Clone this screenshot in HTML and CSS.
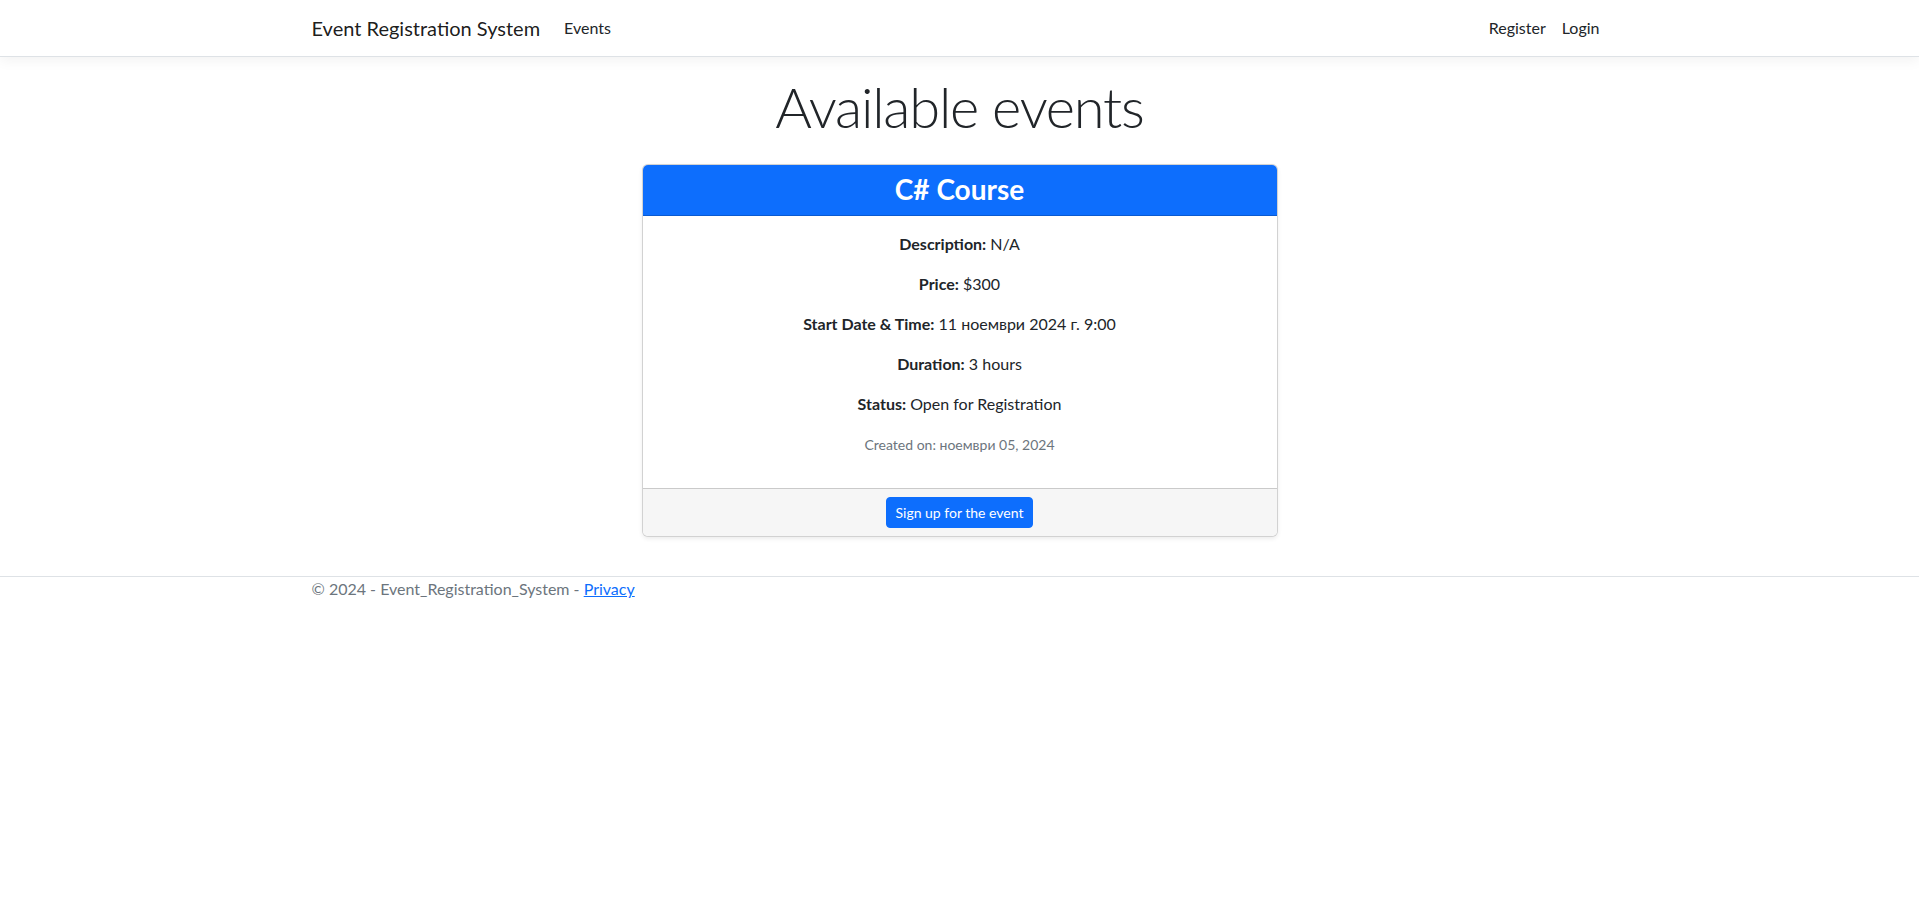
FILE: index.html
```html
<!DOCTYPE html>
<html lang="en">
<head>
<meta charset="utf-8">
<title>Available events - Event Registration System</title>
<link rel="stylesheet" href="styles.css">
</head>
<body>
<header class="navbar">
  <div class="container nav-inner">
    <a class="brand" href="#">Event Registration System</a>
    <ul class="nav-links">
      <li><a class="nav-link" href="#">Events</a></li>
    </ul>
    <ul class="nav-links nav-right">
      <li><a class="nav-link" href="#">Register</a></li>
      <li><a class="nav-link" href="#">Login</a></li>
    </ul>
  </div>
</header>

<main class="container main">
  <h1 class="display">Available events</h1>
  <div class="card">
    <div class="card-header">
      <h3 class="card-title">C# Course</h3>
    </div>
    <div class="card-body">
      <p><strong>Description:</strong> N/A</p>
      <p><strong>Price:</strong> $300</p>
      <p><strong>Start Date &amp; Time:</strong> 11 ноември 2024 г. 9:00</p>
      <p><strong>Duration:</strong> 3 hours</p>
      <p><strong>Status:</strong> Open for Registration</p>
      <p><small class="muted">Created on: ноември 05, 2024</small></p>
    </div>
    <div class="card-footer">
      <a class="btn" href="#">Sign up for the event</a>
    </div>
  </div>
</main>

<footer class="footer">
  <div class="container">
    &copy; 2024 - Event_Registration_System - <a class="privacy" href="#">Privacy</a>
  </div>
</footer>
</body>
</html>
```
FILE: styles.css
```css
* { box-sizing: border-box; }

html, body {
  margin: 0;
  padding: 0;
}

body {
  font-family: Lato, "Noto Sans", sans-serif;
  font-size: 16px;
  line-height: 1.5;
  color: #212529;
  background: #fff;
}

a { text-decoration: none; }

.container {
  width: 100%;
  max-width: 1320px;
  margin: 0 auto;
  padding: 0 12px;
}

/* Navbar */
.navbar {
  background: #fff;
  border-bottom: 1px solid #dee2e6;
  box-shadow: 0 4px 12px rgba(0, 0, 0, 0.05);
  padding: 8px 0;
  margin-bottom: 16px;
}

.nav-inner {
  display: flex;
  align-items: center;
}

.brand {
  font-size: 20px;
  line-height: 30px;
  padding: 5px 0;
  margin-right: 16px;
  color: rgba(0, 0, 0, 0.9);
  white-space: nowrap;
}

.nav-links {
  display: flex;
  list-style: none;
  margin: 0;
  padding: 0;
}

.nav-right {
  margin-left: auto;
}

.nav-link {
  display: block;
  padding: 8px;
  color: #212529;
  font-size: 16px;
  line-height: 24px;
}

/* Main */
.main {
  padding-bottom: 16px;
}

.display {
  font-size: 56px;
  font-weight: 300;
  line-height: 1.2;
  letter-spacing: -1.2px;
  text-align: center;
  margin: 0 0 24px;
}

.card {
  width: 636px;
  margin: 0 auto;
  border: 1px solid rgba(0, 0, 0, 0.175);
  border-radius: 6px;
  box-shadow: 0 2px 4px rgba(0, 0, 0, 0.075);
  overflow: hidden;
  background: #fff;
}

.card-header {
  background: #0d6efd;
  color: #fff;
  padding: 8px 16px;
  border-bottom: 1px solid rgba(0, 0, 0, 0.175);
  text-align: center;
}

.card-title {
  margin: 0;
  font-size: 28px;
  font-weight: 700;
  line-height: 1.2;
}

.card-body {
  padding: 16px;
  text-align: center;
}

.card-body p {
  margin: 0 0 16px;
}

.card-body strong {
  font-weight: 700;
}

.muted {
  font-size: 14px;
  color: #6c757d;
}

.card-footer {
  background: #f6f6f6;
  border-top: 1px solid rgba(0, 0, 0, 0.175);
  padding: 8px 16px;
  text-align: center;
}

.btn {
  display: inline-block;
  background: #0d6efd;
  color: #fff;
  border: 1px solid #0d6efd;
  border-radius: 4px;
  font-size: 14px;
  line-height: 21px;
  padding: 4px 8px;
}

/* Footer */
.footer {
  margin-top: 23px;
  border-top: 1px solid #dee2e6;
  color: #6c757d;
  line-height: 24px;
}

.privacy {
  color: #0d6efd;
  text-decoration: underline;
}
```
